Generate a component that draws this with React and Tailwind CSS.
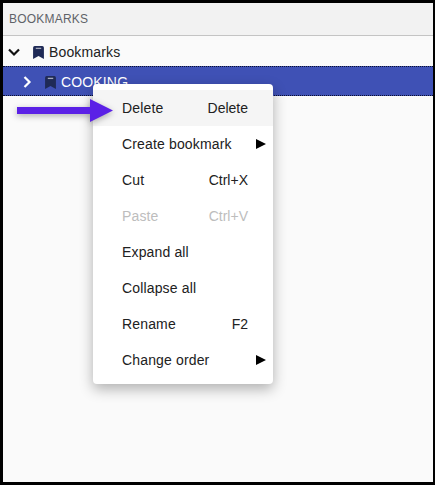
const font = { fontFamily: '"Liberation Sans", Arial, sans-serif' };

const items = [
  { label: "Delete", hint: "Delete", active: true },
  { label: "Create bookmark", arrow: true },
  { label: "Cut", hint: "Ctrl+X" },
  { label: "Paste", hint: "Ctrl+V", disabled: true },
  { label: "Expand all" },
  { label: "Collapse all" },
  { label: "Rename", hint: "F2" },
  { label: "Change order", arrow: true },
];

function BookmarkIcon({ className }) {
  return (
    <svg viewBox="0 0 10 12" className={className} fill="currentColor">
      <path d="M1.5 0h7A1.5 1.5 0 0 1 10 1.5V12L5 9.2 0 12V1.5A1.5 1.5 0 0 1 1.5 0z" />
      <rect x="2.5" y="1.6" width="5" height="1.2" fill="#ffffff" opacity="0.6" />
    </svg>
  );
}

function Chevron({ down, className }) {
  return (
    <svg viewBox="0 0 12 12" className={className} fill="none" stroke="currentColor" strokeWidth="2.2">
      {down ? <path d="M1 3.5l5 5 5-5" /> : <path d="M3.5 1l5 5-5 5" />}
    </svg>
  );
}

function MenuItem({ item }) {
  return (
    <div
      className={`flex h-9 items-center justify-between pl-[29px] text-[14px] tracking-[0.15px] ${
        item.arrow ? "pr-[7px]" : "pr-[25px]"
      } ${item.active ? "bg-[#f5f5f5]" : ""} ${item.disabled ? "text-[#bdbdbd]" : "text-[#212121]"}`}
    >
      <span>{item.label}</span>
      {item.hint && <span className="tracking-normal">{item.hint}</span>}
      {item.arrow && (
        <svg viewBox="0 0 10 10" className="h-[10px] w-[10px] text-black" fill="currentColor">
          <path d="M0 0l10 5-10 5z" />
        </svg>
      )}
    </div>
  );
}

export default function App() {
  return (
    <div className="h-[485px] w-[435px] border-[3px] border-r-2 border-black bg-[#fafafa]" style={font}>
      <div className="flex h-[33px] items-center border-b border-[#c4c4c4] bg-[#f2f2f2] pl-[6px] text-[12px] tracking-[0.2px] text-[#5f6368]">
        BOOKMARKS
      </div>
      <div className="flex h-[30px] items-center pl-[5px] pt-[2px] text-[14px] tracking-[0.15px] text-[#212121]">
        <Chevron down className="h-[12px] w-[12px] text-[#111]" />
        <BookmarkIcon className="ml-[13px] h-[13px] w-[11px] text-[#1f2a56]" />
        <span className="ml-[5px]">Bookmarks</span>
      </div>
      <div className="relative flex h-[30px] items-center border-y border-dotted border-[#0b1030] bg-[#3f51b5] pl-[18px] pt-[2px] text-[14px] tracking-[0.15px] text-white">
        <Chevron className="h-[12px] w-[12px]" />
        <BookmarkIcon className="ml-[12px] h-[13px] w-[11px] text-[#1f2a56]" />
        <span className="ml-[5px]">COOKING</span>

        <div className="absolute left-[90px] top-[17px] z-10 w-[180px] rounded-[4px] bg-white py-[6px] shadow-[0_5px_14px_rgba(0,0,0,0.3)]">
          {items.map((item) => (
            <MenuItem key={item.label} item={item} />
          ))}
        </div>

        <svg viewBox="0 0 96 23" className="absolute left-[14px] top-[32px] z-20 h-[23px] w-[96px] overflow-visible drop-shadow-[0_2px_3px_rgba(0,0,0,0.3)]">
          <path d="M0 8h73V0l23 11.5L73 23v-8H0z" fill="#5b21e6" />
        </svg>
      </div>
    </div>
  );
}
